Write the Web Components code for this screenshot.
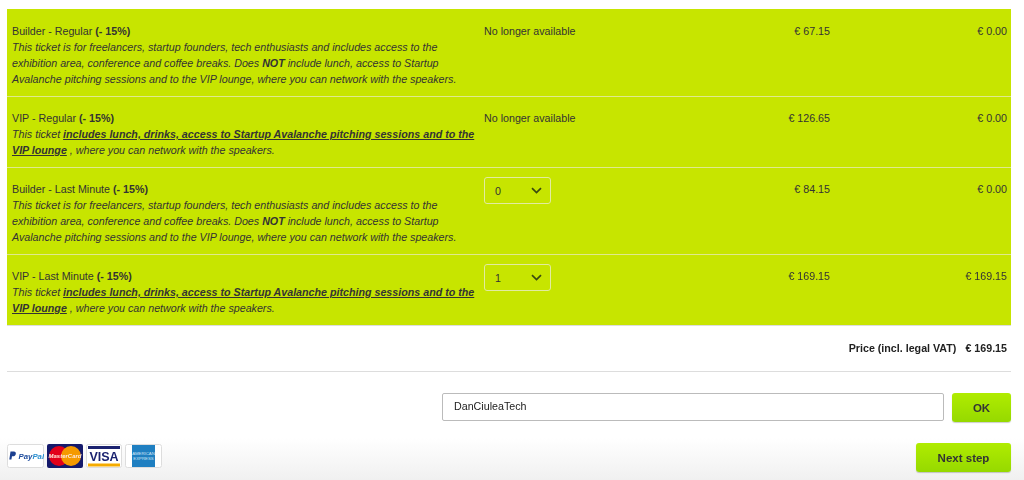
<!DOCTYPE html>
<html>
<head>
<meta charset="utf-8">
<title>Tickets</title>
<style>
html, body { margin: 0; height: 100%; }
body {
    width: 1024px;
    height: 480px;
    overflow: hidden;
    font-family: "Liberation Sans", Arial, sans-serif;
    color: #333;
    background: linear-gradient(#fff 0, #fff 438px, #f0f0f0 480px);
}
</style>
</head>
<body>
<ticket-page>
    <ticket-table>
        <ticket-row price="€ 67.15" total="€ 0.00" unavailable>
            <span slot="name">Builder - Regular <b>(- 15%)</b></span>
            <div>This ticket is for freelancers, startup founders, tech enthusiasts and includes access to the</div>
            <div>exhibition area, conference and coffee breaks. Does <b>NOT</b> include lunch, access to Startup</div>
            <div>Avalanche pitching sessions and to the VIP lounge, where you can network with the speakers.</div>
        </ticket-row>
        <ticket-row price="€ 126.65" total="€ 0.00" unavailable>
            <span slot="name">VIP - Regular <b>(- 15%)</b></span>
            <div>This ticket <b><u>includes lunch, drinks, access to Startup Avalanche pitching sessions and to the</u></b></div>
            <div><b><u>VIP lounge</u></b> , where you can network with the speakers.</div>
        </ticket-row>
        <ticket-row price="€ 84.15" total="€ 0.00" qty="0">
            <span slot="name">Builder - Last Minute <b>(- 15%)</b></span>
            <div>This ticket is for freelancers, startup founders, tech enthusiasts and includes access to the</div>
            <div>exhibition area, conference and coffee breaks. Does <b>NOT</b> include lunch, access to Startup</div>
            <div>Avalanche pitching sessions and to the VIP lounge, where you can network with the speakers.</div>
        </ticket-row>
        <ticket-row price="€ 169.15" total="€ 169.15" qty="1">
            <span slot="name">VIP - Last Minute <b>(- 15%)</b></span>
            <div>This ticket <b><u>includes lunch, drinks, access to Startup Avalanche pitching sessions and to the</u></b></div>
            <div><b><u>VIP lounge</u></b> , where you can network with the speakers.</div>
        </ticket-row>
    </ticket-table>
    <price-total label="Price (incl. legal VAT)" amount="€ 169.15"></price-total>
    <promo-form value="DanCiuleaTech"></promo-form>
    <checkout-bar></checkout-bar>
</ticket-page>

<script>
class TicketPage extends HTMLElement {
    constructor() {
        super();
        this.attachShadow({mode: 'open'});
        this.shadowRoot.innerHTML = `
        <style>
        :host{
            display: block;
            box-sizing: border-box;
            width: 1024px;
            padding: 9px 13px 0 7px;
            filter: blur(.4px);
        }
        </style>
        <slot></slot>
        `
    }
}

class TicketTable extends HTMLElement {
    constructor() {
        super();
        this.attachShadow({mode: 'open'});
        this.shadowRoot.innerHTML = `
        <style>
        :host{
            display: block;
            background: #c7e500;
            padding-top: 1px;
        }
        </style>
        <slot></slot>
        `
    }
}

class TicketRow extends HTMLElement {
    constructor() {
        super();
        this.attachShadow({mode: 'open'});
    }
    connectedCallback() {
        const qty = this.hasAttribute('unavailable')
            ? `<div>No longer available</div>`
            : `<qty-select value="${this.getAttribute('qty')}"></qty-select>`;
        this.shadowRoot.innerHTML = `
        <style>
        :host{
            display: grid;
            grid-template-columns: 477px 200px 146px 1fr;
            padding: 13px 4px 9px 0;
            border-bottom: 1px solid #dfe98f;
            font-size: 10.7px;
            line-height: 16px;
            color: #333;
        }
        :host(:last-child){
            border-bottom-color: #ddd;
        }
        .info{
            padding-left: 5px;
            white-space: nowrap;
        }
        .desc{
            font-style: italic;
        }
        .num{
            text-align: right;
        }
        </style>
        <div class="info">
            <slot name="name"></slot>
            <div class="desc"><slot></slot></div>
        </div>
        <div>${qty}</div>
        <div class="num">${this.getAttribute('price')}</div>
        <div class="num">${this.getAttribute('total')}</div>
        `
    }
}

class QtySelect extends HTMLElement {
    constructor() {
        super();
        this.attachShadow({mode: 'open'});
    }
    connectedCallback() {
        this.shadowRoot.innerHTML = `
        <style>
        :host{
            display: flex;
            align-items: center;
            justify-content: space-between;
            box-sizing: border-box;
            width: 67px;
            height: 27px;
            margin-top: -4px;
            padding: 0 8px 0 10px;
            border: 1px solid #e2eba0;
            border-radius: 3px;
        }
        svg{
            display: block;
        }
        </style>
        <span>${this.getAttribute('value')}</span>
        <svg width="11" height="7" viewBox="0 0 11 7"><path d="M1 1.2l4.5 4.3L10 1.2" fill="none" stroke="#3a4a10" stroke-width="1.7"/></svg>
        `
    }
}

class PriceTotal extends HTMLElement {
    constructor() {
        super();
        this.attachShadow({mode: 'open'});
    }
    connectedCallback() {
        this.shadowRoot.innerHTML = `
        <style>
        :host{
            display: flex;
            justify-content: flex-end;
            gap: 9px;
            padding: 14px 4px 15px 0;
            border-bottom: 1px solid #ddd;
            font-size: 10.7px;
            line-height: 16px;
            font-weight: bold;
            color: #222;
        }
        </style>
        <span>${this.getAttribute('label')}</span>
        <span>${this.getAttribute('amount')}</span>
        `
    }
}

class GreenButton extends HTMLElement {
    constructor() {
        super();
        this.attachShadow({mode: 'open'});
        this.shadowRoot.innerHTML = `
        <style>
        :host{
            display: flex;
            align-items: center;
            justify-content: center;
            height: 29px;
            border-radius: 3px;
            background: linear-gradient(#b0ec00, #96d900);
            box-shadow: 0 1px 1px rgba(0,0,0,.2);
            font-size: 11.5px;
            font-weight: bold;
            color: #333;
        }
        </style>
        <slot></slot>
        `
    }
}

class PromoForm extends HTMLElement {
    constructor() {
        super();
        this.attachShadow({mode: 'open'});
    }
    connectedCallback() {
        this.shadowRoot.innerHTML = `
        <style>
        :host{
            display: flex;
            justify-content: flex-end;
            gap: 8px;
            margin-top: 21px;
        }
        .field{
            box-sizing: border-box;
            width: 502px;
            height: 28px;
            padding-left: 11px;
            border: 1px solid #bbb;
            border-radius: 2px;
            background: #fff;
            font-size: 10.7px;
            line-height: 25px;
            color: #222;
        }
        green-button{
            width: 59px;
        }
        </style>
        <div class="field">${this.getAttribute('value')}</div>
        <green-button>OK</green-button>
        `
    }
}

class CheckoutBar extends HTMLElement {
    constructor() {
        super();
        this.attachShadow({mode: 'open'});
        this.shadowRoot.innerHTML = `
        <style>
        :host{
            display: flex;
            justify-content: space-between;
            align-items: flex-start;
            margin-top: 21px;
        }
        pay-logos{
            margin-top: 1px;
        }
        green-button{
            width: 95px;
        }
        </style>
        <pay-logos></pay-logos>
        <green-button>Next step</green-button>
        `
    }
}

class PayLogos extends HTMLElement {
    constructor() {
        super();
        this.attachShadow({mode: 'open'});
        this.shadowRoot.innerHTML = `
        <style>
        :host{
            display: flex;
            gap: 3px;
            font-family: "Liberation Sans", Arial, sans-serif;
        }
        svg{
            display: block;
        }
        </style>
        <svg width="37" height="24" viewBox="0 0 37 24">
            <rect x=".5" y=".5" width="36" height="23" rx="2" fill="#fff" stroke="#ddd"/>
            <path d="M3.500 7.500h3.400c1.500 0 2.200 1 1.900 2.400-.3 1.500-1.400 2.400-2.800 2.400H5l-.6 3.200H2.300z" fill="#1b3f8f"/>
            <text x="11.500" y="15" font-size="7.800" font-weight="bold" font-style="italic" fill="#1b4a9c">Pay<tspan fill="#2a8fd0">Pal</tspan></text>
        </svg>
        <svg width="36" height="24" viewBox="0 0 36 24">
            <rect width="36" height="24" rx="2" fill="#14196b"/>
            <circle cx="12" cy="12" r="10" fill="#e2001a"/>
            <circle cx="24" cy="12" r="10" fill="#f59a00"/>
            <text x="18" y="14.200" text-anchor="middle" font-size="6" font-weight="bold" font-style="italic" fill="#ffe9dc">MasterCard</text>
        </svg>
        <svg width="36" height="24" viewBox="0 0 36 24">
            <rect x=".5" y=".5" width="35" height="23" rx="2" fill="#fff" stroke="#ddd"/>
            <rect x="2" y="2" width="32" height="3" fill="#1b2370"/>
            <rect x="2" y="19.500" width="32" height="3" fill="#f5ab00"/>
            <text x="18" y="16.500" text-anchor="middle" font-size="12.500" font-weight="bold" fill="#1b2370">VISA</text>
        </svg>
        <svg width="37" height="24" viewBox="0 0 37 24">
            <rect x=".5" y=".5" width="36" height="23" rx="2" fill="#fff" stroke="#ddd"/>
            <rect x="7" y="1" width="23" height="22" fill="#1f7fc1"/>
            <text x="18.500" y="10.500" text-anchor="middle" font-size="4.300" fill="#cfe6f6">AMERICAN</text>
            <text x="18.500" y="15.500" text-anchor="middle" font-size="4.300" fill="#cfe6f6">EXPRESS</text>
        </svg>
        `
    }
}

window.customElements.define('ticket-page', TicketPage);
window.customElements.define('ticket-table', TicketTable);
window.customElements.define('ticket-row', TicketRow);
window.customElements.define('qty-select', QtySelect);
window.customElements.define('price-total', PriceTotal);
window.customElements.define('green-button', GreenButton);
window.customElements.define('promo-form', PromoForm);
window.customElements.define('checkout-bar', CheckoutBar);
window.customElements.define('pay-logos', PayLogos);
</script>
</body>
</html>
